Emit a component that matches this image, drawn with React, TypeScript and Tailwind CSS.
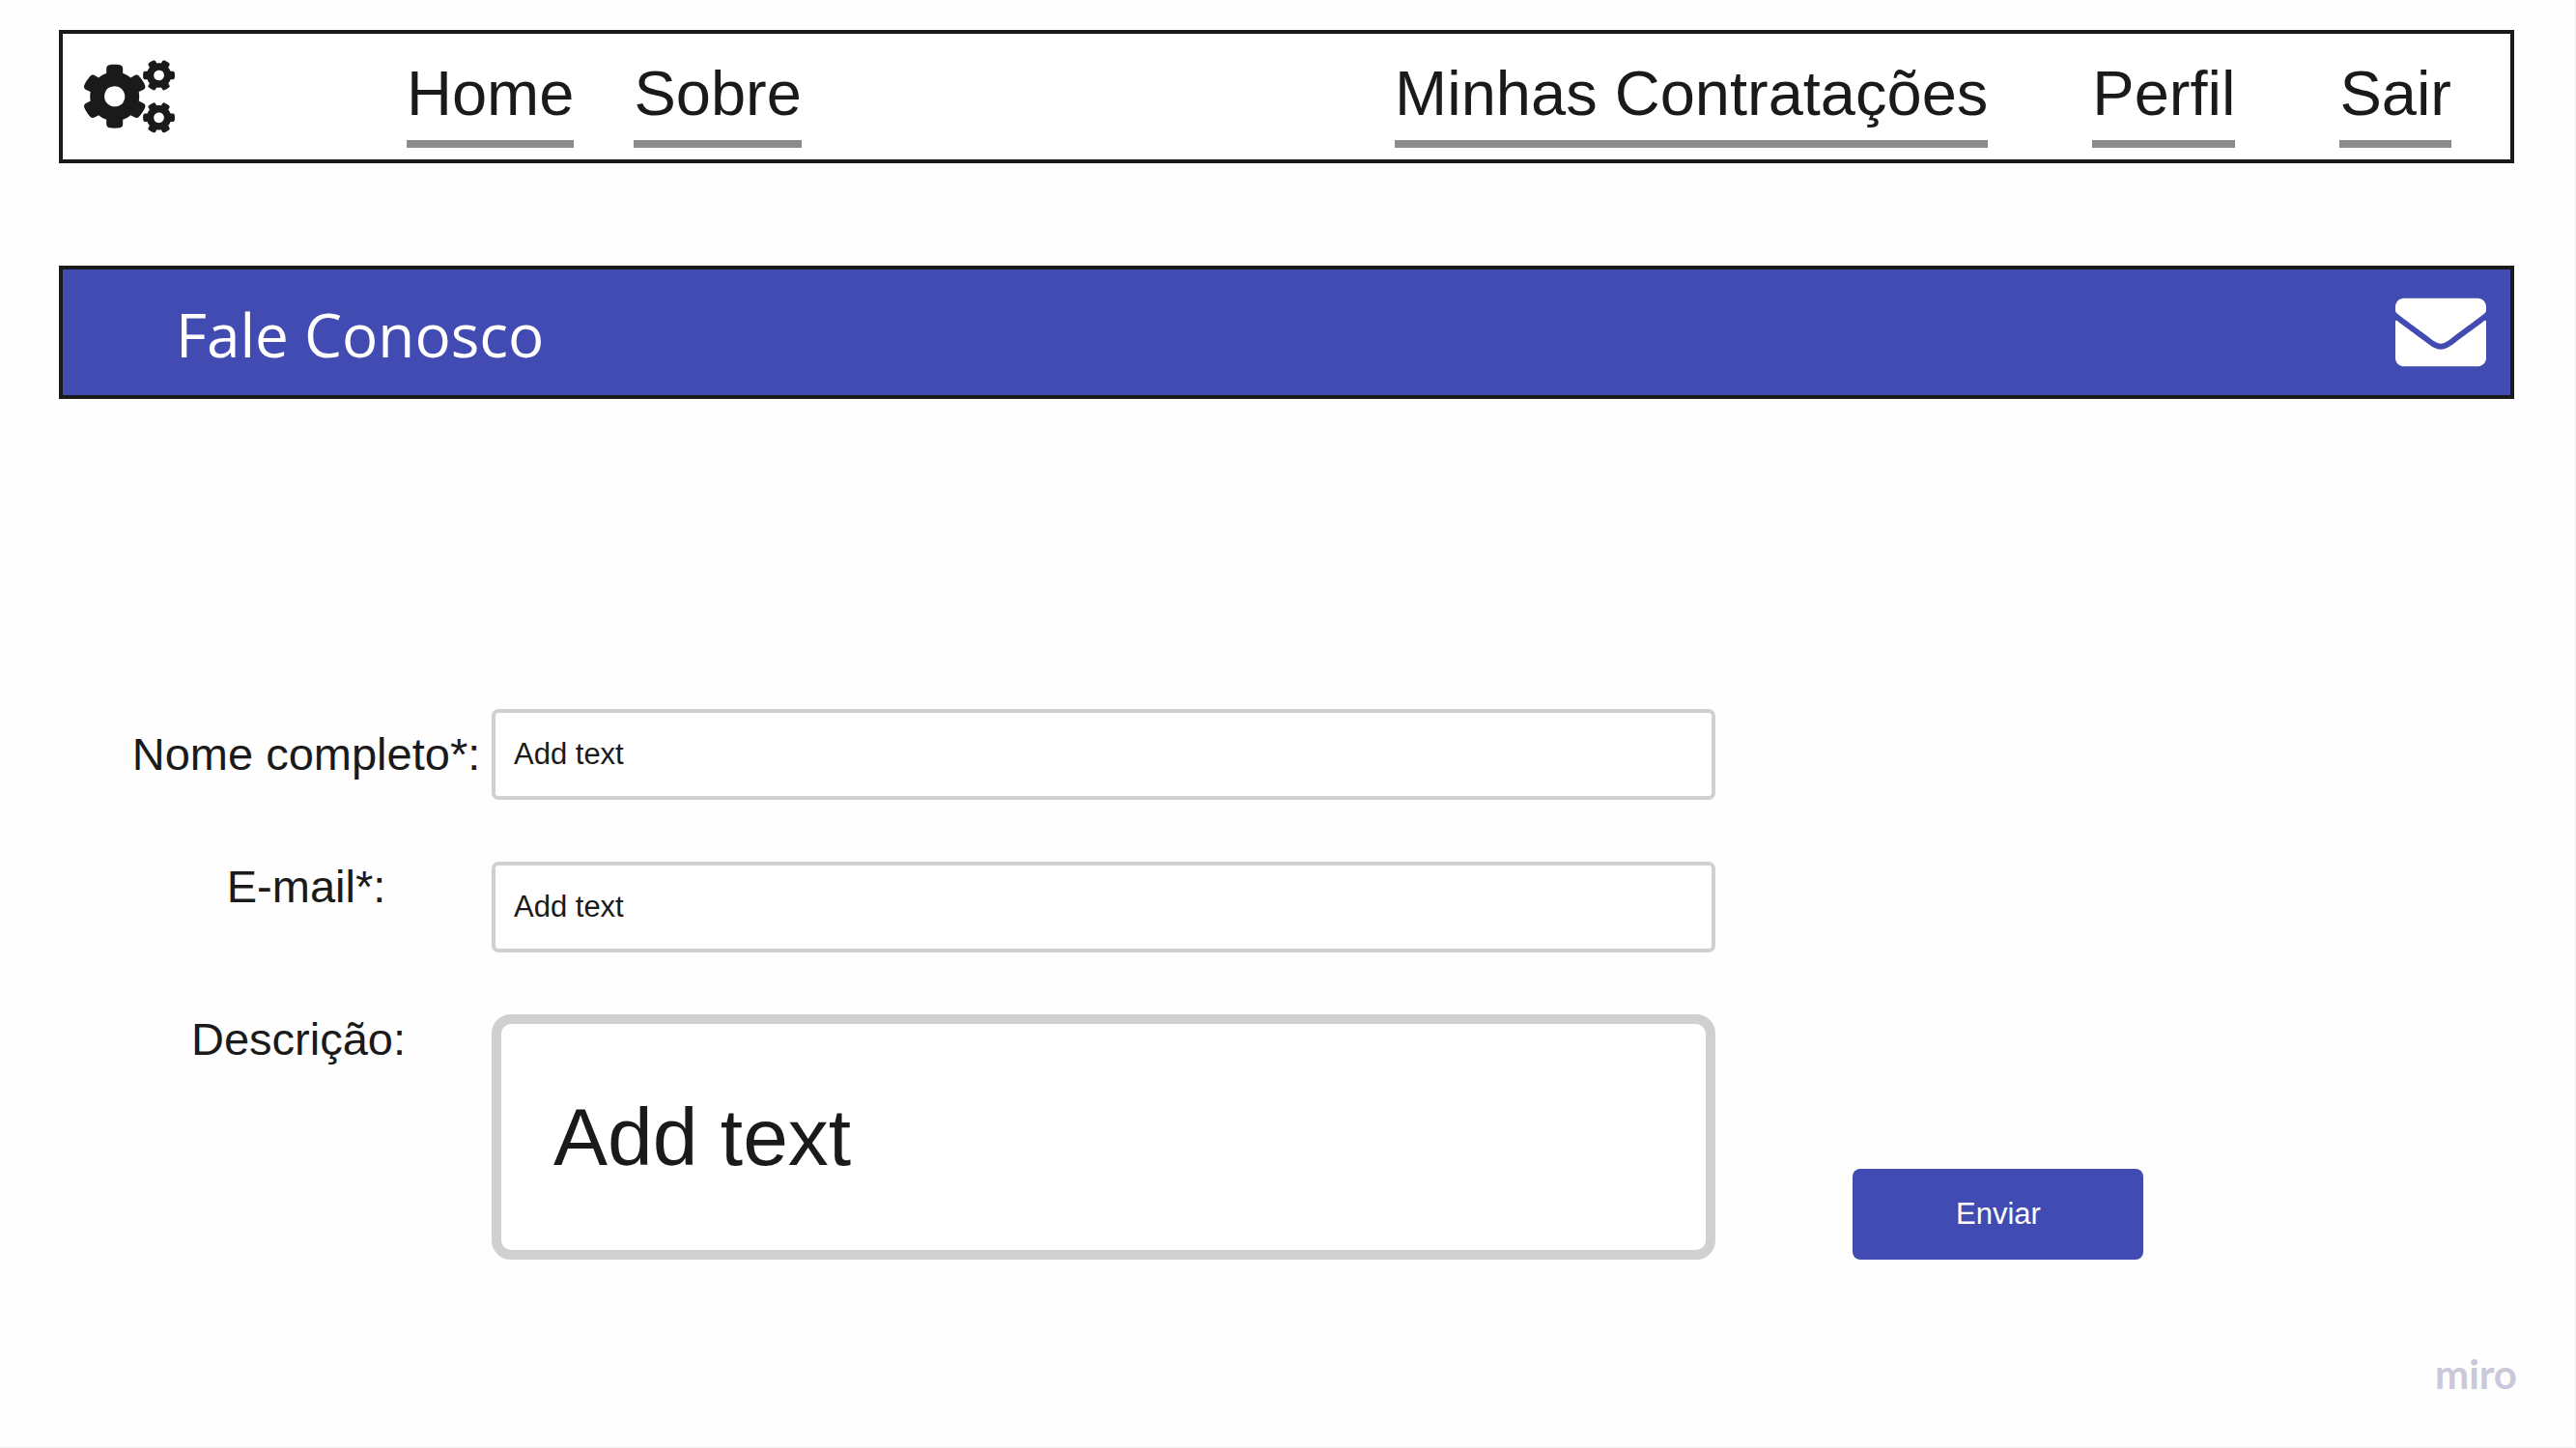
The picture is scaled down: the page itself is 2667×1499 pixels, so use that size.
import type { InputHTMLAttributes, ReactNode } from "react";
import { FaCogs, FaEnvelope } from "react-icons/fa";

function NavLink({ children }: { children: ReactNode }) {
  return (
    <li>
      <a
        href="#"
        className="block border-b-8 border-[#8c8c8c] pb-3 text-[65px] leading-[72px] whitespace-nowrap"
      >
        {children}
      </a>
    </li>
  );
}

const rowClass = "grid grid-cols-[384px_minmax(0,1fr)]";
const labelClass = "text-center text-[47px] leading-[52px] whitespace-nowrap";

function TextInput(props: InputHTMLAttributes<HTMLInputElement>) {
  return (
    <input
      {...props}
      className="h-[94px] w-full rounded-[7px] border-4 border-[#d0d0d0] bg-white px-[19px] text-[31px] outline-none"
    />
  );
}

export default function App() {
  return (
    <div className="flex min-h-screen flex-col border-r border-b border-[#f2f2f2] bg-[#fefefe] font-['Liberation_Sans',Arial,sans-serif] text-[#1a1a1a]">
      <header className="mt-[31px] mr-[63px] ml-[61px]">
        <nav className="flex h-[138px] items-end border-4 border-[#1a1a1a] bg-white pr-[61px] pl-[22px]">
          <a href="#" aria-label="Início" className="self-center">
            <FaCogs className="h-[76px] w-[94px]" />
          </a>
          <ul className="ml-[240px] flex gap-[62px] pb-3">
            <NavLink>Home</NavLink>
            <NavLink>Sobre</NavLink>
          </ul>
          <ul className="ml-auto flex gap-[108px] pb-3">
            <NavLink>Minhas Contratações</NavLink>
            <NavLink>Perfil</NavLink>
            <NavLink>Sair</NavLink>
          </ul>
        </nav>
      </header>

      <main>
        <div className="mt-[106px] mr-[63px] ml-[61px] flex h-[138px] items-center justify-between border-4 border-[#1a1a1a] bg-[#424bb2] pr-[25px] pl-[117px] text-white">
          <h1 className="pt-1 font-['Open_Sans',sans-serif] text-[62px] leading-[84px]">
            Fale Conosco
          </h1>
          <FaEnvelope className="size-[94px]" />
        </div>

        <form
          className="mt-[321px] flex items-end gap-[142px] pr-[16.75%] pl-[125px]"
          onSubmit={(event) => event.preventDefault()}
        >
          <div className="flex flex-1 flex-col gap-16">
            <div className={`${rowClass} items-center`}>
              <label htmlFor="nome" className={labelClass}>
                Nome completo*:
              </label>
              <TextInput id="nome" type="text" defaultValue="Add text" />
            </div>
            <div className={`${rowClass} items-start`}>
              <label htmlFor="email" className={labelClass}>
                E-mail*:
              </label>
              <TextInput id="email" type="text" inputMode="email" defaultValue="Add text" />
            </div>
            <div className={`${rowClass} items-start`}>
              <label htmlFor="descricao" className={`${labelClass} pr-4`}>
                Descrição:
              </label>
              <textarea
                id="descricao"
                rows={1}
                defaultValue="Add text"
                className="block w-full resize-none overflow-hidden rounded-[20px] border-10 border-[#d0d0d0] bg-white px-[54px] py-[68px] text-[84px] leading-[98px] outline-none"
              />
            </div>
          </div>
          <button
            type="submit"
            className="h-[94px] w-[301px] rounded-lg bg-[#424bb2] text-[31px] text-white"
          >
            Enviar
          </button>
        </form>
      </main>

      <footer className="mt-auto flex justify-end pr-[60px] pb-[51px]">
        <span className="font-[Lato,sans-serif] text-[42px] leading-[50px] font-bold text-[#cbc9d9]">
          miro
        </span>
      </footer>
    </div>
  );
}
